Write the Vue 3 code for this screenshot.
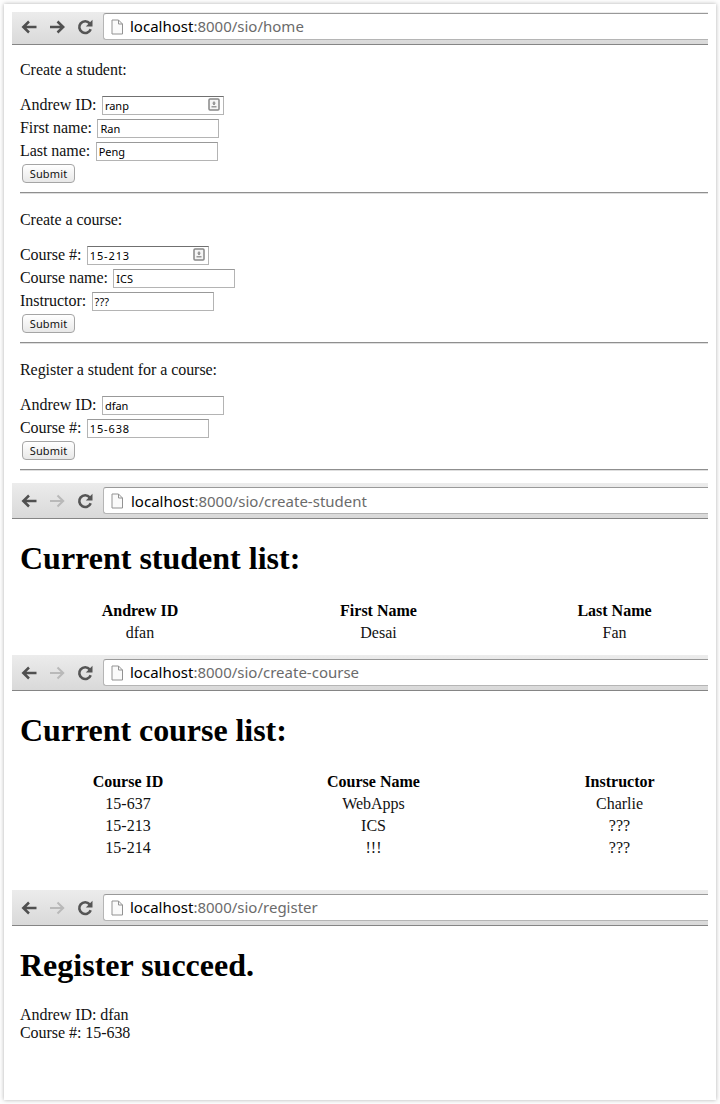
<script setup>
import { h } from 'vue'

const forms = [
  {
    title: 'Create a student:',
    fields: [
      { label: 'Andrew ID:', value: 'ranp', key: true },
      { label: 'First name:', value: 'Ran' },
      { label: 'Last name:', value: 'Peng' },
    ],
  },
  {
    title: 'Create a course:',
    fields: [
      { label: 'Course #:', value: '15-213', key: true, digits: true },
      { label: 'Course name:', value: 'ICS' },
      { label: 'Instructor:', value: '???' },
    ],
  },
  {
    title: 'Register a student for a course:',
    fields: [
      { label: 'Andrew ID:', value: 'dfan' },
      { label: 'Course #:', value: '15-638', digits: true },
    ],
  },
]

const students = ['Andrew ID', 'First Name', 'Last Name', 'dfan', 'Desai', 'Fan']
const courses = [
  'Course ID', 'Course Name', 'Instructor',
  '15-637', 'WebApps', 'Charlie',
  '15-213', 'ICS', '???',
  '15-214', '!!!', '???',
]

// Browser toolbar: back, forward, reload and the address field
const Toolbar = (props) =>
  h('div', { class: 'toolbar' }, [
    h('svg', { class: 'nav', width: 88, height: 24, viewBox: '0 0 88 24', fill: 'none' }, [
      h('path', { d: 'M24.500 12H11.500M17 6.500L11.300 12L17 17.500', stroke: '#505050', 'stroke-width': 2.5 }),
      h('path', { d: 'M38 12H51M45.500 6.500L51.200 12L45.500 17.500', stroke: props.forward ? '#505050' : '#b9b9b9', 'stroke-width': props.forward ? 2.5 : 2 }),
      h('path', { d: 'M77.700 8.300A5.900 5.900 0 1 0 78.700 14.200', stroke: '#555', 'stroke-width': 2.6 }),
      h('path', { d: 'M80.500 4.800V11.500H73.800Z', fill: '#555' }),
    ]),
    h('div', { class: 'address' }, [
      h('svg', { class: 'page', width: 13, height: 16, viewBox: '0 0 13 16' }, [
        h('path', { d: 'M1 1H7.500L11.500 5V15H1Z', fill: '#fafafa', stroke: '#929292' }),
        h('path', { d: 'M7.500 1V5H11.500', fill: 'none', stroke: '#929292' }),
      ]),
      h('span', { class: 'url' }, [h('b', 'localhost'), ':8000/sio/' + props.path]),
    ]),
  ])
Toolbar.props = ['path', 'forward']
</script>

<template>
  <main class="sheet">
    <Toolbar class="first" path="home" :forward="true" />
    <section v-for="f in forms" :key="f.title" class="form">
      <p class="title">{{ f.title }}</p>
      <label v-for="x in f.fields" :key="x.label" class="row">
        <span>{{ x.label }}</span>
        <span class="input" :class="{ keyed: x.key, digits: x.digits }">
          <span>{{ x.value }}</span>
          <svg v-if="x.key" width="12" height="13" viewBox="0 0 12 13">
            <rect x="1" y="1" width="10" height="11" rx="1" fill="#f5f5f5" stroke="#888" stroke-width="1.5" />
            <path d="M6 3L8 5.500H7V7H5V5.500H4ZM3.500 8H8.500V9.500H3.500Z" fill="#999" />
          </svg>
        </span>
      </label>
      <div class="action"><button>Submit</button></div>
      <div class="rule"></div>
    </section>

    <Toolbar class="student-bar" path="create-student" />
    <section class="student">
      <h1>Current student list:</h1>
      <div class="table">
        <span v-for="(c, i) in students" :key="i" :class="{ head: i < 3 }">{{ c }}</span>
      </div>
    </section>

    <Toolbar path="create-course" />
    <section class="course">
      <h1>Current course list:</h1>
      <div class="table">
        <span v-for="(c, i) in courses" :key="i" :class="{ head: i < 3 }">{{ c }}</span>
      </div>
    </section>

    <Toolbar path="register" />
    <section class="result">
      <h1>Register succeed.</h1>
      <p>Andrew ID: dfan<br />Course #: 15-638</p>
    </section>
  </main>
</template>

<style>
body {
  background: #fdfdfd;
}
</style>

<style scoped>
.sheet {
  box-sizing: border-box;
  width: 712px;
  height: 1096px;
  margin: 4px;
  padding: 8px 8px 0;
  overflow: hidden;
  background: #fff;
  box-shadow: 0 0 4px rgba(0, 0, 0, 0.3);
  font: 16px/18px "Liberation Serif", serif;
  color: #111;
}
p, h1 { margin: 0; }
.toolbar {
  box-sizing: border-box;
  display: flex;
  height: 36px;
  padding: 4px 0 4px;
  background: linear-gradient(#ececec, #d9d9d9);
  border-bottom: 1px solid #858585;
}
.toolbar.first { height: 33px; padding-top: 1px; }
.toolbar :deep(.nav) { flex: none; margin: 2px 3px 0 0; }
.toolbar :deep(.address) {
  box-sizing: border-box;
  display: flex;
  align-items: center;
  flex: 1;
  height: 27px;
  padding-left: 7px;
  border: 1px solid #b5b5b5;
  border-top-color: #999;
  border-right: 0;
  border-radius: 3px 0 0 3px;
  background: #fff;
}
.toolbar :deep(.page) { flex: none; margin-right: 6px; }
.toolbar :deep(.url) {
  padding-bottom: 2px;
  font: 15px/24px "Noto Sans", sans-serif;
  white-space: nowrap;
  color: #6b6b6b;
}
.toolbar.student-bar :deep(.url) { padding: 0 0 0 1px; }
.toolbar :deep(b) { font-weight: 400; color: #000; }
.form { padding: 16px 0 0 8px; }
.title { height: 33px; letter-spacing: -0.05px; }
.row {
  display: flex;
  align-items: center;
  gap: 5.5px;
  height: 23px;
  line-height: 22px;
  letter-spacing: -0.05px;
}
.row > span:first-child { padding-bottom: 1px; }
.input {
  box-sizing: border-box;
  display: flex;
  align-items: center;
  justify-content: space-between;
  width: 122px;
  height: 19px;
  padding: 0 3px 1px 2px;
  border: 1px solid #b4b4b4;
  border-top-color: #999;
  background: #fff;
  font: 11px/15px "Noto Sans", sans-serif;
  letter-spacing: 0;
  color: #000;
}
.digits { letter-spacing: 0.85px; }
.keyed { border-top-color: #707070; }
.input svg { margin-top: -1px; }
.action { display: flex; height: 29px; padding: 1px 0 0 2px; box-sizing: border-box; }
button {
  box-sizing: border-box;
  width: 53px;
  height: 19px;
  padding: 0;
  border: 1px solid #a5a5a5;
  border-radius: 4px;
  background: linear-gradient(#fff, #e8e8e8);
  font: 11px/16px "Noto Sans", sans-serif;
  letter-spacing: 0.15px;
  color: #111;
}
.rule {
  height: 2px;
  box-sizing: border-box;
  border-top: 1px solid #8f8f8f;
  border-bottom: 1px solid #dedede;
}
.form + .form { padding-top: 17px; }
.student-bar { margin-top: 12px; }
h1 { font-size: 32px; line-height: 36px; font-weight: 700; color: #000; }
.student { height: 115px; padding: 21px 0 0 8px; }
.course { height: 178px; padding: 21px 0 0 8px; }
.course h1 { letter-spacing: -0.05px; }
.result { padding: 21px 0 0 8px; }
.table {
  display: grid;
  grid-template-columns: 240px 237px 235px;
  grid-auto-rows: 22px;
  margin-top: 24px;
  line-height: 22px;
  text-align: center;
}
.course .table { grid-template-columns: 216px 275px 217px; margin-top: 23px; }
.head { font-weight: 700; color: #000; }
.result p { margin-top: 23px; letter-spacing: -0.05px; }
</style>
